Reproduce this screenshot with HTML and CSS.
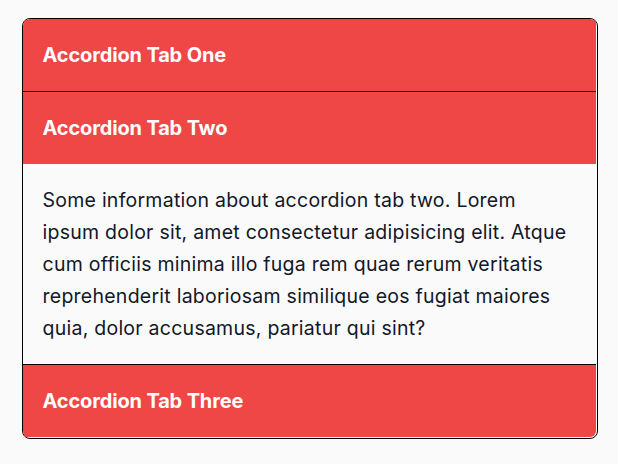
FILE: index.html
```html
<!DOCTYPE html>
<html lang="en">
<head>
<meta charset="utf-8">
<title>Accordion</title>
<link rel="stylesheet" href="styles.css">
</head>
<body>
<div class="accordion">
  <div class="item">
    <div class="header">Accordion Tab One</div>
  </div>
  <div class="item">
    <div class="header">Accordion Tab Two</div>
    <div class="content">Some information about accordion tab two. Lorem ipsum dolor sit, amet consectetur adipisicing elit. Atque cum officiis minima illo fuga rem quae rerum veritatis reprehenderit laboriosam similique eos fugiat maiores quia, dolor accusamus, pariatur qui sint?</div>
  </div>
  <div class="item">
    <div class="header">Accordion Tab Three</div>
  </div>
</div>
</body>
</html>
```
FILE: styles.css
```css
html, body {
  margin: 0;
  padding: 0;
  background: #fafafa;
}
body {
  font-family: Inter, "Noto Sans", sans-serif;
  padding-top: 18px;
}
.accordion {
  width: 573px;
  margin: 0 auto;
  border: 1px solid #000;
  border-radius: 8px;
  overflow: hidden;
  background: #fcfcfc;
  padding: 0 1px 1px 0;
  position: relative;
  left: 0.5px;
}
.item + .item {
  border-top: 1px solid #000;
}
.header {
  height: 72px;
  box-sizing: border-box;
  display: flex;
  align-items: center;
  padding: 0 20px;
  background: #ef4646;
  color: #fff;
  font-weight: 700;
  font-size: 20px;
  letter-spacing: -0.15px;
}
.content {
  background: #fafafa;
  color: #111827;
  font-size: 19.5px;
  letter-spacing: 0.25px;
  line-height: 32px;
  padding: 20px 24px 20px 20px;
}
.item:last-child .header {
  border-bottom-right-radius: 6px;
}
```
